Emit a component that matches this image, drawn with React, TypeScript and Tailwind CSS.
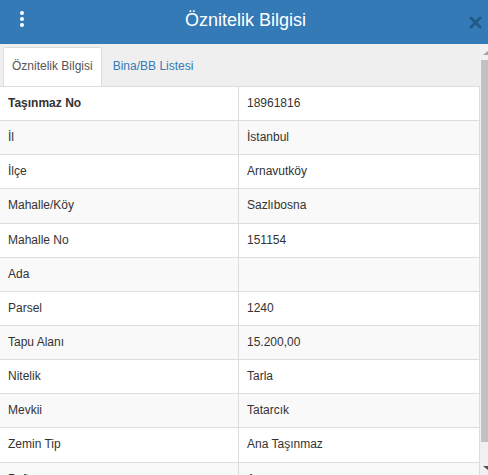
const rows: [string, string][] = [
  ["Taşınmaz No", "18961816"],
  ["İl", "İstanbul"],
  ["İlçe", "Arnavutköy"],
  ["Mahalle/Köy", "Sazlıbosna"],
  ["Mahalle No", "151154"],
  ["Ada", ""],
  ["Parsel", "1240"],
  ["Tapu Alanı", "15.200,00"],
  ["Nitelik", "Tarla"],
  ["Mevkii", "Tatarcık"],
  ["Zemin Tip", "Ana Taşınmaz"],
  ["Pafta", "Arsa"],
];

export default function App() {
  return (
    <div className="w-[488px] h-[475px] overflow-hidden bg-white font-['Liberation_Sans',Arial,sans-serif] text-[#333]">
      {/* header */}
      <div className="h-[44px] bg-[#337ab7] flex items-center">
        <div className="w-[44px] pl-[20px] flex flex-col gap-[2px] mb-[6px]">
          <span className="w-[4px] h-[4px] rounded-full bg-white" />
          <span className="w-[4px] h-[4px] rounded-full bg-white" />
          <span className="w-[4px] h-[4px] rounded-full bg-white" />
        </div>
        <div className="flex-1 text-center text-white text-[18px] leading-none mb-[4px] pl-[3px]">
          Öznitelik Bilgisi
        </div>
        <div className="w-[44px] flex justify-end pr-[6px]">
          <svg width="13" height="13" viewBox="0 0 13 13">
            <path d="M2 2 L11 11 M11 2 L2 11" stroke="#245a88" strokeWidth="3" strokeLinecap="round" />
          </svg>
        </div>
      </div>

      <div className="flex h-[431px]">
        <div className="w-[480px] overflow-hidden">
          {/* tabs */}
          <div className="h-[43px] bg-[#efefef] border-b border-[#ddd] flex items-end pl-[3px] text-[12px] leading-[1.42857]">
            <div className="h-[39px] bg-white border border-b-0 border-[#ddd] rounded-t-[2px] px-[8px] pt-[10px] text-[#555]">
              Öznitelik Bilgisi
            </div>
            <div className="h-[39px] ml-[2px] px-[9px] pt-[11px] text-[#337ab7]">
              Bina/BB Listesi
            </div>
          </div>

          {/* table */}
          <div className="border-r border-[#ddd] text-[12px] leading-[1.42857]">
            {rows.map(([k, v], i) => (
              <div
                key={k}
                className={`grid grid-cols-[239px_1fr] border-b border-[#ddd] ${
                  i % 2 === 1 ? "bg-[#f9f9f9]" : "bg-white"
                }`}
              >
                <div className={`border-r border-[#ddd] px-[8px] py-[8px] ${i === 0 ? "font-bold" : ""}`}>
                  {k}
                </div>
                <div className="px-[8px] py-[8px] h-[33.14px]">{v}</div>
              </div>
            ))}
          </div>
        </div>

        {/* scrollbar */}
        <div className="w-[8px] bg-[#f1f1f1] flex flex-col items-end">
          <div className="h-[16px] flex items-center justify-end pt-[2px]">
            <svg width="5" height="4" viewBox="0 0 5 4">
              <path d="M0 4 L5 4 L5 0 Z" fill="#a3a3a3" />
            </svg>
          </div>
          <div className="w-[7px] h-[382px] bg-[#c1c1c1]" />
          <div className="flex-1 flex items-end justify-end pb-[5px]">
            <svg width="5" height="4" viewBox="0 0 5 4">
              <path d="M0 0 L5 0 L5 4 Z" fill="#505050" />
            </svg>
          </div>
        </div>
      </div>
    </div>
  );
}
